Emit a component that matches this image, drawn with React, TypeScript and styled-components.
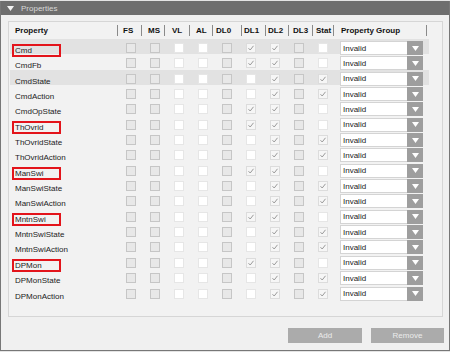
import React from "react";
import styled, { createGlobalStyle } from "styled-components";

const GlobalStyle = createGlobalStyle`
  body {
    margin: 0;
    background: #e4e4e4;
    font-family: "Liberation Sans", Arial, sans-serif;
  }
`;

const Panel = styled.div`
  width: 450px;
  height: 350px;
  margin-top: 1px;
  box-sizing: border-box;
  border: 1px solid #777;
  border-top: none;
  background: #f0f0f0;
  display: flex;
  flex-direction: column;
`;

const TitleBar = styled.div`
  height: 14px;
  background: #6e6e6e;
  display: flex;
  align-items: center;
  gap: 7px;
  padding-left: 6px;
  color: #d8d8d8;
  font-size: 8px;
`;

const Body = styled.div`
  padding: 6px 6px 0 7px;
  display: flex;
  flex-direction: column;
`;

const TableBox = styled.div`
  height: 296px;
  box-sizing: border-box;
  border: 1px solid #d6d6d6;
  background: #f2f2f2;
  padding-left: 1px;
`;

const HeaderRow = styled.div`
  display: grid;
  grid-template-columns: 107px 24px 23px 25px 23px 29px 24px 23px 24px 21px 94px;
  height: 17px;
  align-items: center;
  font-size: 8px;
  font-weight: bold;
  color: #111;
`;

const HeadCell = styled.div<{ $pad: number }>`
  display: flex;
  align-items: center;
  height: 100%;
  span {
    padding-left: ${(p) => p.$pad}px;
  }
`;

const Sep = styled.i<{ $end?: boolean }>`
  display: block;
  width: 1px;
  height: 11px;
  background: #8a8a8a;
  margin-left: ${(p) => (p.$end ? "auto" : "0")};
`;

const Row = styled.div<{ $hl?: boolean }>`
  display: grid;
  grid-template-columns: 109px repeat(9, 24px) 94px;
  width: 419px;
  height: 15.35px;
  align-items: center;
  background: ${(p) => (p.$hl ? "#e2e2e2" : "transparent")};
`;

const NameTag = styled.span<{ $flag?: boolean }>`
  display: inline-block;
  box-sizing: border-box;
  width: 49px;
  height: 13px;
  margin-left: 2px;
  padding-left: 1px;
  border: 2px solid ${(p) => (p.$flag ? "#e3141b" : "transparent")};
  font-size: 8px;
  line-height: 9px;
  color: #222;
  white-space: nowrap;
`;

const BoxCell = styled.div`
  display: flex;
  justify-content: center;
  align-items: center;
`;

const Box = styled.div<{ $state: string }>`
  width: 10px;
  height: 10px;
  box-sizing: border-box;
  border: 1px solid
    ${(p) => (p.$state === "d" ? "#c6c6c6" : p.$state === "c" ? "#dcdcdc" : "#e6e6e6")};
  background: ${(p) => (p.$state === "d" ? "#e8e8e8" : p.$state === "c" ? "#f6f6f6" : "#fff")};
  display: flex;
`;

const GroupCell = styled.div`
  display: flex;
  padding-left: 5px;
`;

const Select = styled.div`
  width: 67px;
  height: 14px;
  box-sizing: border-box;
  background: #fff;
  border: 1px solid #d4d4d4;
  border-right: none;
  padding-left: 2px;
  display: flex;
  align-items: center;
  font-size: 8px;
  color: #222;
`;

const SelectBtn = styled.div`
  width: 16px;
  height: 14px;
  background: #9e9e9e;
  display: flex;
  align-items: center;
  justify-content: center;
`;

const Buttons = styled.div`
  display: flex;
  justify-content: flex-end;
  gap: 9px;
  margin-top: 11px;
  margin-right: -1px;
`;

const Button = styled.button<{ $w: number }>`
  width: ${(p) => p.$w}px;
  height: 15px;
  border: none;
  padding: 0;
  background: #ababab;
  color: #ececec;
  font-family: inherit;
  font-size: 8px;
`;

const heads = [
  { label: "FS", pad: 5 },
  { label: "MS", pad: 6 },
  { label: "VL", pad: 7 },
  { label: "AL", pad: 6 },
  { label: "DL0", pad: 3 },
  { label: "DL1", pad: 2 },
  { label: "DL2", pad: 2 },
  { label: "DL3", pad: 4 },
  { label: "Stat", pad: 3 },
];

type Prop = { name: string; flag?: boolean; hl?: boolean; dl1: string; stat: string };

const rows: Prop[] = [
  { name: "Cmd", flag: true, hl: true, dl1: "c", stat: "u" },
  { name: "CmdFb", dl1: "c", stat: "u" },
  { name: "CmdState", hl: true, dl1: "u", stat: "c" },
  { name: "CmdAction", dl1: "u", stat: "c" },
  { name: "CmdOpState", dl1: "c", stat: "u" },
  { name: "ThOvrid", flag: true, dl1: "c", stat: "u" },
  { name: "ThOvridState", dl1: "u", stat: "c" },
  { name: "ThOvridAction", dl1: "u", stat: "c" },
  { name: "ManSwi", flag: true, dl1: "c", stat: "u" },
  { name: "ManSwiState", dl1: "u", stat: "c" },
  { name: "ManSwiAction", dl1: "u", stat: "c" },
  { name: "MntnSwi", flag: true, dl1: "c", stat: "u" },
  { name: "MntnSwiState", dl1: "u", stat: "c" },
  { name: "MntnSwiAction", dl1: "u", stat: "c" },
  { name: "DPMon", flag: true, dl1: "c", stat: "u" },
  { name: "DPMonState", dl1: "u", stat: "c" },
  { name: "DPMonAction", dl1: "u", stat: "c" },
];

const Check = () => (
  <svg width="8" height="8" viewBox="0 0 8 8" style={{ margin: "auto" }}>
    <polyline points="1.5,4.2 3.2,6 6.5,1.8" fill="none" stroke="#9a9a9a" strokeWidth="1" />
  </svg>
);

const Arrow = ({ color = "#fff" }: { color?: string }) => (
  <svg width="7" height="5" viewBox="0 0 7 5">
    <polygon points="0,0 7,0 3.5,5" fill={color} />
  </svg>
);

const App = () => {
  return (
    <>
      <GlobalStyle />
      <Panel>
        <TitleBar>
          <Arrow color="#f2f2f2" />
          <span>Properties</span>
        </TitleBar>
        <Body>
          <TableBox>
            <HeaderRow>
              <HeadCell $pad={5}>
                <span>Property</span>
              </HeadCell>
              {heads.map((h) => (
                <HeadCell key={h.label} $pad={h.pad}>
                  <Sep />
                  <span>{h.label}</span>
                </HeadCell>
              ))}
              <HeadCell $pad={7}>
                <Sep />
                <span>Property Group</span>
                <Sep $end />
              </HeadCell>
            </HeaderRow>
            {rows.map((r) => {
              const states = ["d", "d", "u", "u", "d", r.dl1, "c", "d", r.stat];
              return (
                <Row key={r.name} $hl={r.hl}>
                  <div>
                    <NameTag $flag={r.flag}>{r.name}</NameTag>
                  </div>
                  {states.map((s, i) => (
                    <BoxCell key={i}>
                      <Box $state={s}>{s === "c" && <Check />}</Box>
                    </BoxCell>
                  ))}
                  <GroupCell>
                    <Select>Invalid</Select>
                    <SelectBtn>
                      <Arrow />
                    </SelectBtn>
                  </GroupCell>
                </Row>
              );
            })}
          </TableBox>
          <Buttons>
            <Button $w={74}>Add</Button>
            <Button $w={73}>Remove</Button>
          </Buttons>
        </Body>
      </Panel>
    </>
  );
};

export default App;
